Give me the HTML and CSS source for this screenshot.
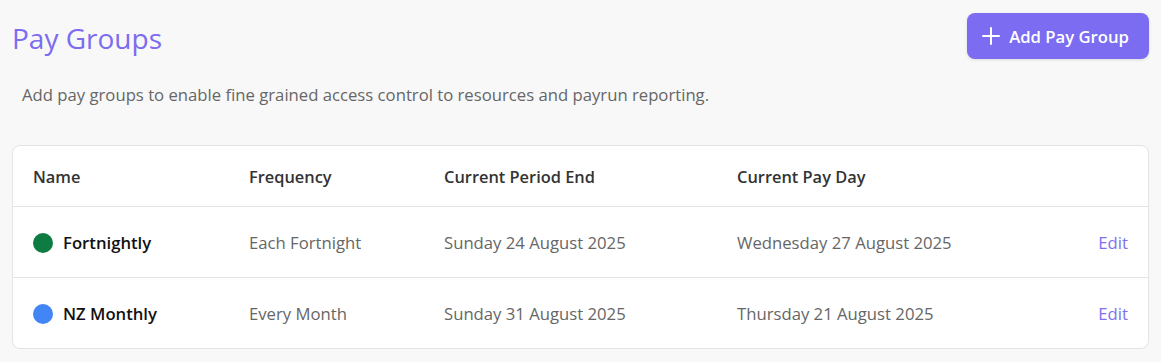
FILE: index.html
```html
<!DOCTYPE html>
<html lang="en">
<head>
    <meta charset="UTF-8">
    <meta name="viewport" content="width=device-width, initial-scale=1.0">
    <title>Pay Groups</title>
    <link rel="stylesheet" href="styles.css">
</head>
<body>
    <div class="page-head">
        <h1 class="title">Pay Groups</h1>
        <button class="add-btn" type="button">
            <svg class="plus" viewBox="0 0 20 20" width="20" height="20"><path d="M10 2v16M2 10h16" stroke="#fff" stroke-width="2" stroke-linecap="round" fill="none"/></svg>
            Add Pay Group
        </button>
    </div>
    <p class="intro">Add pay groups to enable fine grained access control to resources and payrun reporting.</p>

    <!-- Pay groups table -->
    <div class="card">
        <table class="groups">
            <thead>
                <tr>
                    <th class="col-name">Name</th>
                    <th class="col-freq">Frequency</th>
                    <th class="col-end">Current Period End</th>
                    <th class="col-pay">Current Pay Day</th>
                    <th class="col-act"></th>
                </tr>
            </thead>
            <tbody>
                <tr>
                    <td><span class="dot green"></span><span class="name">Fortnightly</span></td>
                    <td>Each Fortnight</td>
                    <td>Sunday 24 August 2025</td>
                    <td>Wednesday 27 August 2025</td>
                    <td class="col-act"><a href="#" class="edit">Edit</a></td>
                </tr>
                <tr>
                    <td><span class="dot blue"></span><span class="name">NZ Monthly</span></td>
                    <td>Every Month</td>
                    <td>Sunday 31 August 2025</td>
                    <td>Thursday 21 August 2025</td>
                    <td class="col-act"><a href="#" class="edit">Edit</a></td>
                </tr>
            </tbody>
        </table>
    </div>
</body>
</html>
```

FILE: styles.css
```css
body {
    margin: 0;
    padding: 13px 12px 0 12px;
    background-color: #f8f8f8;
    font-family: "Open Sans", "Noto Sans", Arial, sans-serif;
    color: #333;
}
.page-head {
    display: flex;
    justify-content: space-between;
    align-items: flex-start;
}
.title {
    margin: 7px 0 0 0;
    font-weight: 400;
    font-size: 28px;
    line-height: 36px;
    color: #7b6cf0;
}
.add-btn {
    display: flex;
    align-items: center;
    gap: 8px;
    height: 46px;
    padding: 0 20px 0 14px;
    background: #7b6cf2;
    color: #fff;
    border: none;
    border-radius: 8px;
    font-family: inherit;
    font-size: 16.7px;
    font-weight: 600;
    box-shadow: 0 1px 3px rgba(0, 0, 0, 0.12);
    cursor: pointer;
}
.intro {
    margin: 25px 0 0 10px;
    font-size: 16.7px;
    line-height: 22px;
    color: #666;
}
.card {
    margin-top: 39px;
    background: white;
    border: 1px solid #e4e4e4;
    border-radius: 8px;
    overflow: hidden;
}
.groups {
    width: 100%;
    border-collapse: collapse;
    font-size: 16.7px;
}
.groups th {
    text-align: left;
    font-size: 16.4px;
    font-weight: 600;
    color: #333;
    height: 60px;
    padding: 0 0 0 20px;
}
.groups td {
    height: 70px;
    padding: 0 0 0 20px;
    color: #666;
    border-top: 1px solid #e4e4e4;
}
.col-name { width: 196px; }
.col-freq { width: 175px; }
.col-end { width: 273px; }
.groups .col-act {
    text-align: right;
    padding-right: 20px;
}
.dot {
    display: inline-block;
    width: 20px;
    height: 20px;
    border-radius: 50%;
    vertical-align: middle;
    margin: -3px 10px 0 0;
}
.green { background: #0e7c42; }
.blue { background: #4285f4; }
.name {
    font-weight: 600;
    color: #111;
}
.edit {
    color: #7f6ff2;
    text-decoration: none;
}
```
